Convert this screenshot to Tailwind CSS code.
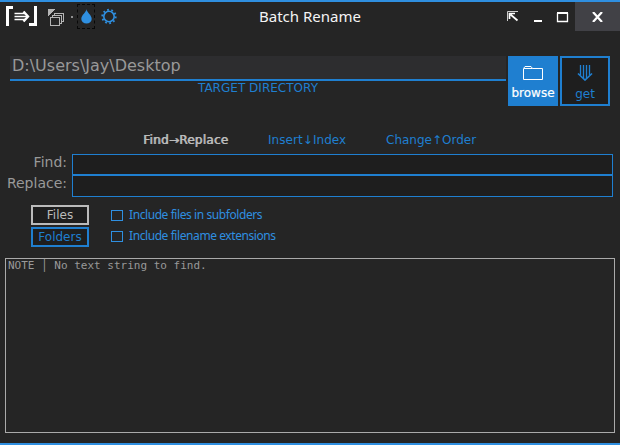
<!DOCTYPE html>
<html lang="en">
<head>
<meta charset="utf-8">
<title>Batch Rename</title>
<script src="https://cdn.jsdelivr.net/npm/@tailwindcss/browser@4"></script>
</head>
<body class="bg-[#252525]">
<div class="flex h-[445px] w-[620px] flex-col overflow-hidden border-y-2 border-[#2f8fe0] bg-[#252525] font-['DejaVu_Sans',sans-serif] text-[#1f7fd0]">
  <header class="flex h-[54px] shrink-0 items-start">
    <div class="flex h-[29px] w-[259px] items-start">
      <svg class="ml-[5px] mt-[4px] h-[20px] w-[34px]" viewBox="0 0 34 20" fill="none" stroke="#fff">
        <path d="M8 1.500H2.500V20" stroke-width="3"/><path d="M24 18.500H30.500V0" stroke-width="3"/>
        <path d="M9.500 7.500H20M9.500 10.500H22M9.500 13.500H20" stroke-width="1.600"/><path d="M18.500 5.500L23 10.500L18.500 15.500" stroke-width="2.400"/>
      </svg>
      <svg class="ml-[8px] mt-[6px] h-[18px] w-[18px]" viewBox="0 0 18 18" fill="none" stroke="#b5b5b5" shape-rendering="crispEdges">
        <path d="M1 1H8L1 8Z" fill="#b5b5b5" stroke="none"/>
        <path d="M7.500 7.500V5.500H16.500V13.500H14.500M5.500 9.500V7.500H14.500V15.500H12.500M3.500 9.500H12.500V17.500H3.500Z"/>
      </svg>
      <span class="ml-[6px] mt-[14px] size-[2px] bg-[#909090]"></span>
      <span class="ml-[4px] mt-[2px] flex h-[25px] w-[18px] justify-center border border-dashed border-[#080808]">
        <svg class="mt-[4px] h-[15px] w-[11px] shrink-0" viewBox="0 0 11 15" fill="#2f8fe0"><path d="M5.500 0C5.500 3 .3 6 .3 10A5.200 4.500 0 0 0 10.700 10C10.700 6 5.500 3 5.500 0Z"/></svg>
      </span>
      <svg class="ml-[6px] mt-[6px] h-[17px] w-[16px]" viewBox="0 0 16 17" fill="none" stroke="#2f8fe0">
        <circle cx="8" cy="8.500" r="5.200" stroke-width="1.600"/>
        <circle cx="8" cy="8.500" r="6.700" stroke-width="1.900" stroke-dasharray="1.800 2.410"/>
      </svg>
    </div>
    <h1 class="mt-[4px] w-[248px] whitespace-nowrap font-['Noto_Sans',sans-serif] text-[15px] leading-[20px] text-[#f4f4f4]">Batch Rename</h1>
    <div class="flex h-[29px] w-[68px] text-white">
      <svg class="h-[29px] w-[68px]" viewBox="0 0 68 29" fill="none" stroke="#fff">
        <path d="M.5 19V9.500H11" stroke="#ccc"/><path d="M2.500 17V11.500H8M3.500 12.500L10.500 18.500" stroke-width="1.700"/>
        <path d="M27 19H35" stroke-width="2"/><path d="M50.500 11V19.500H60.500V11" stroke="#fff" stroke-width="1.300"/><path d="M50 11H61" stroke-width="2"/>
      </svg>
    </div>
    <div class="flex h-[29px] w-[45px] justify-center bg-[#414146]">
      <svg class="mt-[10px] h-[10px] w-[11px]" viewBox="0 0 11 10" stroke="#fff" stroke-width="2.200"><path d="M1 0L10 10M10 0L1 10"/></svg>
    </div>
  </header>

  <section class="flex h-[50px] shrink-0 pl-[10px]">
    <div class="w-[496px]">
      <div class="h-[25px] whitespace-nowrap border-b-2 border-[#1f7fd0] bg-[#2d2d2f] pl-[2px] text-[16px] leading-[19px] text-[#999]">D:\Users\Jay\Desktop</div>
      <div class="text-center text-[12px] leading-[14px] tracking-[0.02px]">TARGET DIRECTORY</div>
    </div>
    <button class="ml-[2px] flex size-[50px] flex-col items-center bg-[#1f7fd0] text-white">
      <svg class="mt-[10px] h-[15px] w-[20px] shrink-0" viewBox="0 0 20 15" fill="none" stroke="#fff"><path d="M.5 13.500V2.500L2 .5H8L9.500 2.500H19.500V13.500ZM1 2.500H9.500"/></svg>
      <span class="mt-[4px] text-[12px] leading-[16px] [-webkit-text-stroke:0.2px_white]">browse</span>
    </button>
    <button class="ml-[2px] flex size-[50px] flex-col items-center border-2 border-[#1f7fd0] bg-[#1e1e1e]">
      <svg class="mt-[7px] h-[16px] w-[16px] shrink-0" viewBox="0 0 16 16" fill="none" stroke="#1f7fd0"><path d="M3.500 0V10M6.500 0V13M9.500 0V13M12.500 0V10" stroke-width="1.300"/><path d="M1 8.500L8 15L15 8.500" stroke-width="1.700"/></svg>
      <span class="mt-[5px] text-[12px] leading-[16px]">get</span>
    </button>
  </section>

  <nav class="flex h-[48px] shrink-0 whitespace-nowrap pt-[26px] text-[12px] leading-[16px]">
    <span class="ml-[143px] w-[125px] tracking-[0.25px] text-[#bbb] [text-shadow:0.8px_0_0_#bbb]">Find→Replace</span>
    <span class="w-[118px] tracking-[0.06px]">Insert↓Index</span>
    <span>Change↑Order</span>
  </nav>

  <section class="grid h-[43px] shrink-0 grid-cols-[72px_541px] grid-rows-[21px_22px] text-[14px] text-[#999]">
    <label class="pr-[5px] text-right leading-[17px]">Find:</label><div class="border border-[#1f7fd0] bg-[#1e1e1e]"></div>
    <label class="pr-[5px] text-right leading-[17px]">Replace:</label><div class="border border-[#1f7fd0] bg-[#1e1e1e]"></div>
  </section>

  <section class="flex h-[61px] shrink-0 pl-[31px] pt-[8px]">
    <div class="flex w-[58px] flex-col gap-[2px] text-center text-[12px] leading-[16px]">
      <button class="h-[20px] border-2 border-[#bbb] bg-[#1e1e1e] text-[#bbb]">Files</button>
      <button class="h-[20px] border-2 border-[#1f7fd0] bg-[#1e1e1e]">Folders</button>
    </div>
    <div class="ml-[22px] flex flex-col gap-[5px] whitespace-nowrap font-['Noto_Sans',sans-serif] text-[12px] leading-[16px] tracking-[-0.42px] text-[#2f8fe0]">
      <label class="flex pt-[2px]"><i class="mt-[3px] mr-[6px] h-[11px] w-[12px] border border-[#2f8fe0]"></i>Include files in subfolders</label>
      <label class="flex"><i class="mt-[3px] mr-[6px] h-[11px] w-[12px] border border-[#2f8fe0]"></i>Include filename extensions</label>
    </div>
  </section>

  <section class="ml-[5px] h-[175px] w-[610px] shrink-0 whitespace-pre border border-[#aaa] pl-[2px] font-['DejaVu_Sans_Mono',monospace] text-[11px] leading-[13px] text-[#999]">NOTE │ No text string to find.</section>
</div>
</body>
</html>
